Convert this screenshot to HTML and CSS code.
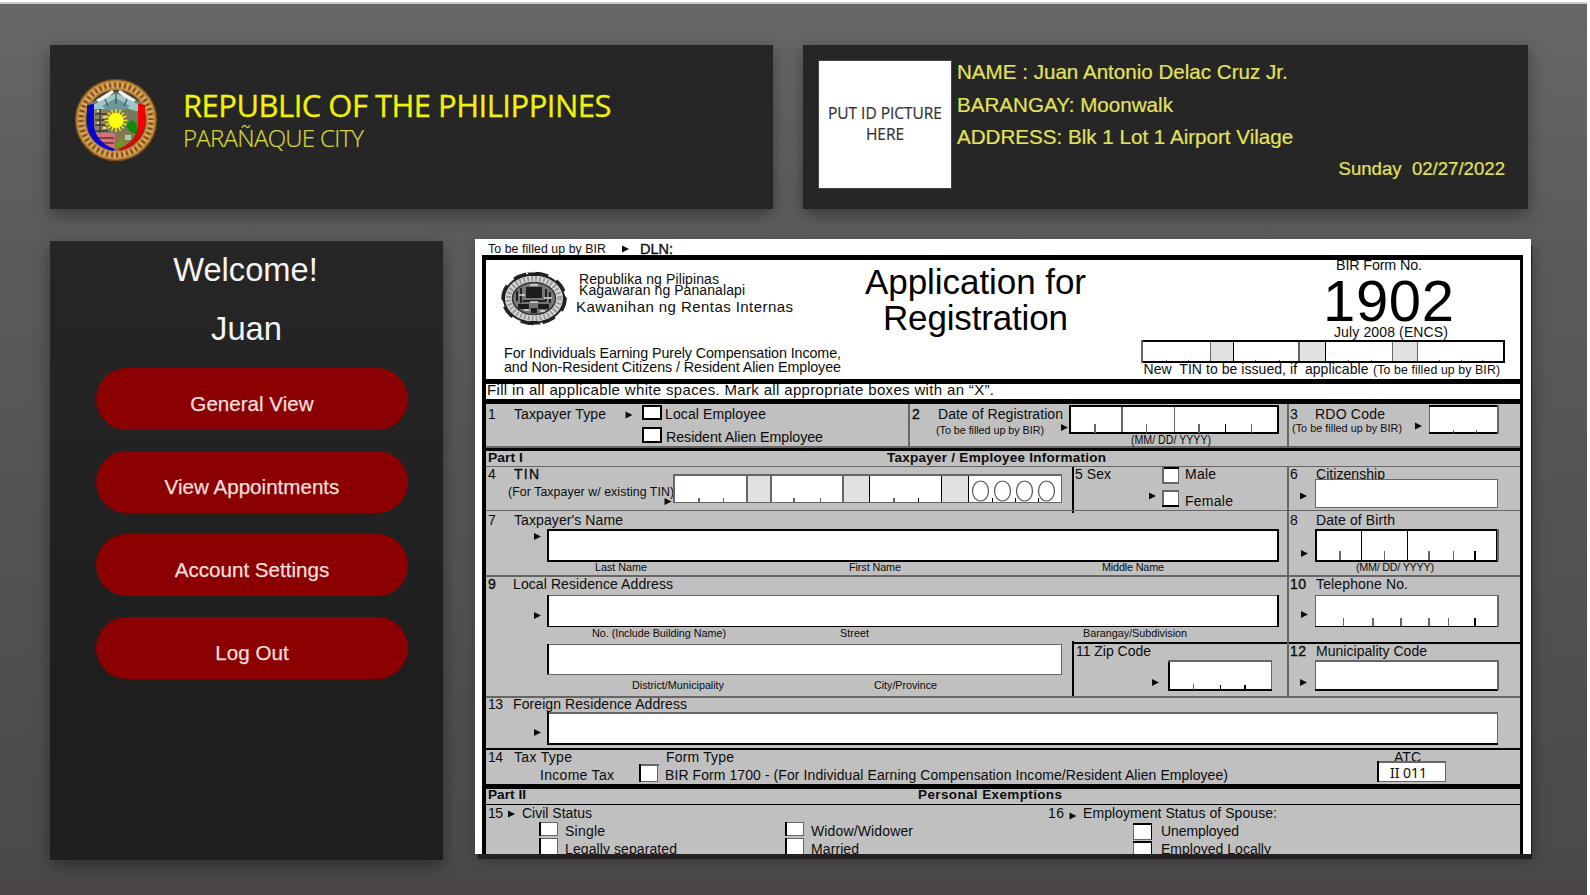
FILE: index.html
```html
<!DOCTYPE html>
<html lang="en">
<head>
<meta charset="utf-8">
<title>Parañaque City Portal</title>
<link rel="stylesheet" href="styles.css">
</head>
<body>
<div class="page">
  <header class="top">
    <section class="card brand">
      <svg class="brand-seal" viewBox="0 0 84 84" width="84" height="84">
        <circle cx="42" cy="42" r="40.5" fill="#a8742c" stroke="#6b4a1c" stroke-width="1.5"/>
        <circle cx="42" cy="42" r="35" fill="none" stroke="#d8a458" stroke-width="8" stroke-dasharray="2.4 2.6"/>
        <circle cx="42" cy="42" r="35" fill="none" stroke="#7a4a20" stroke-width="3.5" stroke-dasharray="1.6 3.4" stroke-dashoffset="2"/>
        <circle cx="42" cy="42" r="39" fill="none" stroke="#c08a40" stroke-width="1.4"/>
        <circle cx="42" cy="42" r="31" fill="#4a4634" stroke="#c08a44" stroke-width="1.4"/>
        <path d="M15 25 42 14 69 25V45C69 61 56 71 42 73 28 71 15 61 15 45Z" fill="#77795e"/>
        <path d="M22 22 38 12 40 14 27 26ZM62 22 46 12 44 14 57 26Z" fill="#f2f2ec"/>
        <path d="M19 27 42 15 66 27 66 34 55 31 42 24 30 31 19 34Z" fill="#9cc8cc"/>
        <path d="M28 28 42 20 56 28 48 33 36 33Z" fill="#6f9699"/>
        <path d="M42 14V26M31 21 34 28M53 21 50 28" stroke="#3f5a60" stroke-width="1.3"/>
        <rect x="20" y="31" width="14" height="27" fill="#8b8064"/>
        <path d="M21 36H33M21 42H33M21 47H33M21 53H34M26 31V58" stroke="#3d3828" stroke-width="1.3"/>
        <path d="M23 33H25M29 39H32M23 45H25M29 50H32" stroke="#e6d8b0" stroke-width="2"/>
        <path d="M21 55H41V71C32 70 25 64 21 55Z" fill="#d87078"/>
        <path d="M22 60H40M26 65H40" stroke="#63343a" stroke-width="1.3"/>
        <path d="M42 56H62C59 65 51 70 42 71Z" fill="#8a7a48"/>
        <path d="M51 57H57V62H51Z" fill="#9fd0b4"/>
        <path d="M42 66 49 62 50 68 42 70Z" fill="#5da020"/>
        <path d="M54 44 59 42 63 47V56L58 55 52 49Z" fill="#0c8a10"/>
        <path d="M13 27 20 26V47C21 58 27 66 41 71L39 73C24 70 13 59 13 44Z" fill="#0505cc"/>
        <path d="M64 26 71 27V44C71 59 60 70 46 73L44 71C57 66 63 58 64 47Z" fill="#c81008"/>
        <path d="M64 26 71 27V46Q69 54 65 56L64 50Z" fill="#f40000"/>
        <path class="sun-rays" d="M42 31V54M30.500 42.500H53.500M34 34.500 50 50.500M50 34.500 34 50.500M37.500 32 46.500 53M46.500 32 37.500 53M31.500 38 52.500 47M52.500 38 31.500 47"/>
        <circle cx="42" cy="42.500" r="7.500" fill="#ffff10"/>
      </svg>
      <div class="brand-text">
        <h1 class="brand-title">REPUBLIC OF THE PHILIPPINES</h1>
        <p class="brand-sub">PARAÑAQUE CITY</p>
      </div>
    </section>
    <section class="card profile">
      <div class="photo">PUT ID PICTURE<br>HERE</div>
      <div class="profile-text">
        <p>NAME : Juan Antonio Delac Cruz Jr.</p>
        <p>BARANGAY: Moonwalk</p>
        <p>ADDRESS: Blk 1 Lot 1 Airport Vilage</p>
        <p class="p-date">Sunday&nbsp; 02/27/2022</p>
      </div>
    </section>
  </header>
  <main class="content">
    <aside class="card sidebar">
      <p class="greeting">Welcome!</p>
      <p class="greeting greeting-name">Juan</p>
      <nav class="menu">
        <a class="menu-btn">General View</a>
        <a class="menu-btn">View Appointments</a>
        <a class="menu-btn">Account Settings</a>
        <a class="menu-btn">Log Out</a>
      </nav>
    </aside>
    <div class="document">
      <svg class="form" viewBox="475 239 1056 615" width="1056" height="615">
        <defs>
          <path id="ar" d="M0 -3.500 7 0 0 3.500Z"/>
        </defs>
        <rect class="w" x="475" y="239" width="1056" height="615"/>
        <text class="t12" x="488" y="253" textLength="118">To be filled up by BIR</text>
        <text class="t14 b5" x="640" y="253.500" textLength="33" lengthAdjust="spacingAndGlyphs">DLN:</text>
        <use href="#ar" x="622" y="249"/>

        <!-- Header block -->
        <g class="seal2">
          <ellipse cx="534" cy="298.500" rx="30" ry="24" fill="#d8d8d8" stroke="#222" stroke-width="2"/>
          <ellipse cx="534" cy="298.500" rx="31" ry="25" fill="none" stroke="#222" stroke-width="3.500" stroke-dasharray="13 9.200"/>
          <ellipse cx="534" cy="298.500" rx="25.500" ry="20" fill="none" stroke="#999" stroke-width="5" stroke-dasharray="2 2"/>
          <ellipse cx="534" cy="298.500" rx="21.500" ry="16" fill="#777" stroke="#333" stroke-width="1.500"/>
          <path d="M526 287H542V298H526ZM518 304H529V309H518ZM538 304H549V309H538ZM531 308H537V313H531Z" fill="#1c1c1c"/>
          <path d="M517 291V301M521 288V303M546 289V301M550 292V303M523 301H546" stroke="#222" stroke-width="2"/>
          <path d="M530 285H538M519 295H525M544 298H552M530 302H538M524 310H529M540 311H545" stroke="#ddd" stroke-width="1.600"/>
          <path d="M501 298.500 505 293V304ZM567 298.500 563 293V304ZM527 272.500H541L537 276H531ZM527 324.500H541L537 321H531Z" fill="#1c1c1c"/>
        </g>
        <g class="t13">
          <text x="579" y="284" textLength="140">Republika ng Pilipinas</text>
          <text x="579" y="295" textLength="166">Kagawaran ng Pananalapi</text>
          <text class="t15" x="576" y="312" textLength="217">Kawanihan ng Rentas Internas</text>
          <text class="t14" x="504" y="357.500" textLength="337">For Individuals Earning Purely Compensation Income,</text>
          <text class="t14" x="504" y="372" textLength="337">and Non-Resident Citizens / Resident Alien Employee</text>
        </g>
        <g class="t35">
          <text x="865" y="294" textLength="221">Application for</text>
          <text x="883" y="330" textLength="185">Registration</text>
        </g>
        <text class="t14" x="1336" y="269.500" textLength="86">BIR Form No.</text>
        <text class="t58" x="1323" y="320.500" textLength="131">1902</text>
        <text class="t13" x="1334" y="336.500" textLength="114">July 2008 (ENCS)</text>
        <g class="crisp">
          <rect class="w" x="1142" y="340" width="363" height="23"/>
          <path class="cell" d="M1211 341H1233V362H1211ZM1300 341H1325V362H1300ZM1393 341H1417V362H1393Z"/>
          <path class="k" d="M1142 340H1505V342H1142ZM1142 361H1505V363H1142ZM1503 340H1505V363H1503ZM1233 341H1234V362H1233ZM1325 341H1326V362H1325Z"/>
          <path class="g" d="M1141 340H1143V363H1141ZM1210 342H1211V361H1210ZM1298 342H1300V361H1298ZM1392 342H1393V361H1392ZM1417 342H1418V361H1417Z"/>
          <path class="g" d="M1166 360H1167V361H1166ZM1188 360H1189V361H1188ZM1255 360H1256V361H1255ZM1279 360H1280V361H1279ZM1348 360H1349V361H1348ZM1371 360H1372V361H1371ZM1439 360H1440V361H1439ZM1461 360H1462V361H1461ZM1482 360H1483V361H1482Z"/>
        </g>
        <text class="t13" x="1143.500" y="374" textLength="225" xml:space="preserve">New  TIN to be issued, if  applicable</text>
        <text class="t12" x="1373" y="374" textLength="127">(To be filled up by BIR)</text>
        <text class="t15" x="487" y="395" textLength="507">Fill in all applicable white spaces. Mark all appropriate boxes with an “X”.</text>

        <!-- Grey body and rules -->
        <g class="crisp">
          <rect class="grey" x="486" y="404" width="1035" height="450"/>
          <path class="k" d="M482 255H1523V260H482ZM482 255H486V854H482ZM1520 255H1523V854H1520ZM486 379H1520V384H486ZM486 399H1520V404H486ZM486 448H1520V451H486ZM1072 466H1074V513H1072ZM1072 641H1074V698H1072ZM1073 642H1520V644H1073ZM486 748H1520V750H486ZM486 784H1520V789H486ZM486 804H1520V805H486Z"/>
          <path class="g" d="M486 446H1520V448H486ZM486 466H1520V467H486ZM486 510H1520V511H486ZM486 575H1520V577H486ZM486 696H1520V698H486ZM908 404H910V447H908ZM1287 404H1289V447H1287ZM1287 466H1289V697H1287Z"/>
        </g>

        <!-- Labels -->
        <g class="t13 up">
          <text x="488" y="420">1</text><text x="514" y="420" textLength="92">Taxpayer Type</text>
          <text x="665" y="420" textLength="101">Local Employee</text>
          <text class="t14" x="666" y="442.500" textLength="157">Resident Alien Employee</text>
          <text class="b5" x="912" y="420">2</text><text x="938" y="420" textLength="125">Date of Registration</text>
          <text x="1290" y="420">3</text><text x="1315" y="420" textLength="70">RDO Code</text>
          <text x="488" y="480">4</text><text class="b5" x="514" y="480" textLength="25">TIN</text>
          <text class="t12" x="508" y="496.500" textLength="166">(For Taxpayer w/ existing TIN)</text>
          <text x="1075" y="480" textLength="36">5 Sex</text>
          <text x="1185" y="480" textLength="31">Male</text><text x="1185" y="506.500" textLength="48">Female</text>
          <text x="1290" y="480">6</text><text x="1316" y="480" textLength="69">Citizenship</text>
          <text x="488" y="526">7</text><text x="514" y="526" textLength="109">Taxpayer's Name</text>
          <text x="1290" y="526">8</text><text x="1316" y="526" textLength="79">Date of Birth</text>
          <text class="b5" x="488" y="590">9</text><text x="513" y="590" textLength="160">Local Residence Address</text>
          <text class="b5" x="1290" y="590" textLength="16">10</text><text x="1316" y="590" textLength="92">Telephone No.</text>
          <text x="1076" y="656.500" textLength="75">11 Zip Code</text>
          <text class="b5" x="1290" y="656.500" textLength="16">12</text><text x="1316" y="656.500" textLength="111">Municipality Code</text>
          <text x="488" y="710" textLength="15">13</text><text x="513" y="710" textLength="174">Foreign Residence Address</text>
          <text x="488" y="763" textLength="15">14</text><text x="514" y="763" textLength="58">Tax Type</text>
          <text x="540" y="781" textLength="74">Income Tax</text>
          <text x="666" y="763" textLength="68">Form Type</text>
          <text x="665" y="781" textLength="563">BIR Form 1700 - (For Individual Earning Compensation Income/Resident Alien Employee)</text>
          <text x="1394" y="763" textLength="27">ATC</text>
          <text x="488" y="819" textLength="15">15</text><text x="522" y="819" textLength="70">Civil Status</text>
          <text x="565" y="836.500" textLength="40">Single</text><text x="565" y="854.500" textLength="112">Legally separated</text>
          <text x="811" y="836.500" textLength="102">Widow/Widower</text><text x="811" y="854.500" textLength="48">Married</text>
          <text x="1048" y="819" textLength="16">16</text><text x="1083" y="819" textLength="194">Employment Status of Spouse:</text>
          <text x="1161" y="836.500" textLength="78">Unemployed</text><text x="1161" y="854.500" textLength="110">Employed Locally</text>
        </g>
        <g class="t13 b up">
          <text x="488" y="462.500" textLength="35" lengthAdjust="spacingAndGlyphs">Part I</text>
          <text x="887" y="462.500" textLength="219">Taxpayer / Employee Information</text>
          <text x="488" y="800" textLength="38" lengthAdjust="spacingAndGlyphs">Part II</text>
          <text x="918" y="800" textLength="144">Personal Exemptions</text>
        </g>
        <g class="t10 up">
          <text x="936" y="434.500" textLength="108">(To be filled up by BIR)</text>
          <text x="1292" y="433" textLength="110">(To be filled up by BIR)</text>
          <text x="595" y="572" textLength="52">Last Name</text><text x="849" y="572" textLength="52">First Name</text>
          <text x="1102" y="572" textLength="62">Middle Name</text><text x="1356" y="572" textLength="78">(MM/ DD/ YYYY)</text>
          <text x="592" y="638" textLength="134">No. (Include Building Name)</text><text x="840" y="638" textLength="29">Street</text>
          <text x="1083" y="638" textLength="104">Barangay/Subdivision</text>
          <text x="632" y="690" textLength="92">District/Municipality</text><text x="874" y="690" textLength="63">City/Province</text>
          <text class="t12" x="1131" y="445" textLength="80" lengthAdjust="spacingAndGlyphs">(MM/ DD/ YYYY)</text>
        </g>

        <!-- Pointers -->
        <use href="#ar" x="625.500" y="415"/><use href="#ar" x="1061" y="427.500"/><use href="#ar" x="1415" y="426"/>
        <use href="#ar" x="664.500" y="501.500"/><use href="#ar" x="1149" y="496"/><use href="#ar" x="1300" y="496"/>
        <use href="#ar" x="534" y="536.500"/><use href="#ar" x="1301" y="553.500"/>
        <use href="#ar" x="534" y="615.500"/><use href="#ar" x="1301" y="614.500"/>
        <use href="#ar" x="1152" y="682.500"/><use href="#ar" x="1300" y="682.500"/>
        <use href="#ar" x="534" y="732.500"/><use href="#ar" x="508" y="814"/><use href="#ar" x="1069.500" y="816"/>

        <!-- Entry boxes -->
        <g class="crisp w">
          <g class="box2">
            <rect x="643" y="406" width="18" height="13"/><rect x="643" y="428" width="18" height="14"/>
            <rect x="1070" y="406" width="208" height="27"/>
            <rect x="548" y="530" width="730" height="31"/><rect x="1316" y="530" width="181" height="31"/>
          </g>
          <g class="box1">
            <rect x="1162.500" y="467.500" width="16" height="16"/><rect x="1162.500" y="490.500" width="16" height="16"/>
            <rect x="1133.500" y="823.500" width="18" height="16"/><rect x="1133.500" y="841.500" width="18" height="20"/>
            <rect x="1429.500" y="405.500" width="68" height="28"/>
            <rect x="673.500" y="474.500" width="388" height="28"/>
            <rect x="1315.500" y="479.500" width="182" height="28"/>
            <rect x="547.500" y="595.500" width="731" height="31"/><rect x="1315.500" y="595.500" width="182" height="31"/>
            <rect x="547.500" y="644.500" width="514" height="30"/>
            <rect x="1168.500" y="660.500" width="103" height="30"/><rect x="1315.500" y="660.500" width="182" height="30"/>
            <rect x="547.500" y="712.500" width="950" height="32"/>
            <rect x="639.500" y="764.500" width="18" height="17"/>
            <rect x="1377.500" y="761.500" width="68" height="20"/>
            <rect x="539.500" y="822.500" width="18" height="13"/><rect x="539.500" y="838.500" width="18" height="20"/>
            <rect x="785.500" y="822.500" width="18" height="13"/><rect x="785.500" y="838.500" width="18" height="20"/>
          </g>
          <path class="cell" d="M747 475H771V502H747ZM843 475H869V502H843ZM942 475H968V502H942Z"/>
          <!-- heavier edges -->
          <path class="k" d="M1429 405H1498V407H1429ZM1429 432H1498V434H1429ZM547 595H549V627H547ZM1277 595H1279V627H1277ZM547 626H1279V627H547ZM1315 626H1498V627H1315ZM547 644H549V675H547ZM1168 660H1170V691H1168ZM1168 689H1272V691H1168ZM1315 689H1498V691H1315ZM547 712H549V745H547ZM547 743H1498V745H547ZM639 764H641V782H639ZM1377 761H1379V782H1377ZM539 822H541V836H539ZM539 838H541V854H539ZM785 822H787V836H785ZM785 838H787V854H785ZM869 474H870V502H869ZM941 474H942V502H941ZM968 474H969V502H968ZM1361 530H1362V561H1361ZM1407 530H1408V561H1407ZM1162 467H1179V469H1162ZM1162 505H1179V507H1162ZM1133 823H1152V825H1133ZM1133 841H1152V843H1133ZM1151 823H1152V840H1151ZM1151 841H1152V854H1151Z"/>
          <path class="g" d="M673 474H1062V476H673ZM673 474H675V502H673ZM746 475H748V502H746ZM770 475H772V502H770ZM842 475H844V502H842ZM1121 407H1123V432H1121ZM1174 407H1175V432H1174ZM1497 405H1499V434H1497ZM1497 529H1499V561H1497ZM1497 595H1499V627H1497ZM547 674H1062V675H547ZM1168 660H1272V662H1168ZM1315 660H1498V662H1315ZM549 712H1498V714H549ZM1497 660H1499V690H1497ZM641 764H659V766H641ZM1379 761H1446V763H1379ZM1162 467H1164V484H1162ZM1162 490H1164V505H1162ZM1162 490H1179V492H1162ZM1162 482H1179V484H1162Z"/>
          <!-- character ticks -->
          <path class="g" d="M1094 424H1096V433H1094ZM1146 424H1147V433H1146ZM1198 424H1200V433H1198ZM1251 424H1252V433H1251ZM1453 430H1454V433H1453ZM1476 430H1477V433H1476ZM698 498H700V502H698ZM723 498H724V502H723ZM793 498H795V502H793ZM820 498H821V502H820ZM893 498H895V502H893ZM1339 551H1341V560H1339ZM1384 551H1385V560H1384ZM1428 551H1430V560H1428ZM1453 551H1454V560H1453ZM1343 618H1344V626H1343ZM1372 618H1374V626H1372ZM1400 618H1402V626H1400ZM1428 618H1430V626H1428ZM1448 618H1449V626H1448ZM1193 684H1194V690H1193Z"/>
          <path class="k" d="M1225 424H1226V433H1225ZM918 498H919V502H918ZM1474 551H1476V560H1474ZM1474 618H1476V626H1474ZM1220 685H1221V690H1220ZM1244 685H1246V690H1244ZM992 498H993V502H992ZM1015 498H1016V502H1015ZM1038 498H1039V502H1038Z"/>
        </g>
        <g class="zero">
          <ellipse cx="980.500" cy="491" rx="8" ry="10"/><ellipse cx="1002.500" cy="491" rx="8" ry="10"/>
          <ellipse cx="1024.500" cy="491" rx="8" ry="10"/><ellipse cx="1046.500" cy="491" rx="8" ry="10"/>
        </g>
        <text class="atc" x="1390" y="778" textLength="37">II 011</text>
      </svg>
    </div>
  </main>
</div>
</body>
</html>
```
FILE: styles.css
```css
* { box-sizing: border-box; }
body {
  margin: 0;
  padding: 2px 3px 0 0;
  background: #fff;
  font-family: "Liberation Sans", Arial, sans-serif;
}
h1, p { margin: 0; }
.page {
  height: 893px;
  overflow: hidden;
  padding: 41px 56px 0 50px;
  border-top: 2px solid #cbcbcb;
  background: linear-gradient(#676767, #5b5b5b 28%, #4b4949 97%, #4b4646);
}
.card {
  background: #262626;
  box-shadow: 0 6px 16px rgba(0, 0, 0, .38);
}
.top { display: flex; gap: 30px; height: 164px; }
.brand {
  width: 723px;
  display: flex;
  align-items: flex-start;
  padding: 33px 0 0 24px;
}
.brand-text { margin-left: 25px; white-space: nowrap; }
.brand-title {
  margin-top: 5px;
  font: 400 31px/44px "Open Sans", sans-serif;
  letter-spacing: -.52px;
  color: #f1f10c;
  -webkit-text-stroke: .3px #f1f10c;
}
.brand-sub {
  margin-top: -7px;
  font: 300 24px/36px "Open Sans", sans-serif;
  letter-spacing: -.7px;
  color: #d6d63a;
  -webkit-text-stroke: .2px #d6d63a;
}
.profile { width: 725px; display: flex; padding: 16px 23px 0 16px; }
.photo {
  width: 132px;
  height: 127px;
  padding-top: 42px;
  background: #fff;
  box-shadow: 0 0 0 1px #444;
  text-align: center;
  color: #333;
  font: 400 15.5px/21px "Open Sans", sans-serif;
  letter-spacing: -.02px;
  white-space: nowrap;
  -webkit-text-stroke: .2px #333;
}
.profile-text {
  flex: 1;
  margin: -5px 0 0 6px;
  font-size: 20.6px;
  line-height: 32.6px;
  color: #e2e25c;
  white-space: nowrap;
  -webkit-text-stroke: .2px #e2e25c;
}
.p-date {
  font-size: 18.6px;
  line-height: 29px;
  text-align: right;
}
.content { display: flex; margin-top: 30px; align-items: flex-start; }
.sidebar {
  width: 393px;
  height: 619px;
  margin-top: 2px;
  padding-top: 1px;
  background: linear-gradient(#262626, #1f1f1f 65%, #221e1e);
}
.greeting {
  width: 391px;
  height: 36px;
  margin-bottom: 22px;
  padding-top: 10px;
  font-size: 32.7px;
  line-height: 36px;
  text-align: center;
  color: #f4f4f4;
}
.greeting-name { width: 393px; padding-top: 11px; }
.menu {
  display: flex;
  flex-direction: column;
  gap: 20.7px;
  margin: 32px 35px 0 46px;
}
.menu-btn {
  height: 62.3px;
  border-radius: 31px;
  padding-top: 12px;
  background: #8b0000;
  color: #f3dfdb;
  font-size: 20.6px;
  line-height: 48px;
  text-align: center;
  -webkit-text-stroke: .25px #f3dfdb;
}
.document {
  width: 1056px;
  height: 615px;
  margin-left: 32px;
  box-shadow: 2px 6px 1px -1px #252122, 2px 5px 14px rgba(0, 0, 0, .3);
}
.form { display: block; overflow: hidden; fill: #0c0c0c; }
.crisp { shape-rendering: crispEdges; }
.form .w { fill: #fff; }
.form .grey { fill: #c0c0c0; }
.form .cell { fill: #e1e1e1; stroke: none; }
.form .k { fill: #000; }
.form .g { fill: #666; }
.box2 { stroke: #000; stroke-width: 2; }
.box1 { stroke: #666; stroke-width: 1; }
.zero { fill: none; stroke: #555; stroke-width: 1.2; }
.t10 { font-size: 10.8px; }
.t12 { font-size: 12.3px; }
.t13 { font-size: 14px; }
.t14 { font-size: 14.3px; }
.t15 { font-size: 15px; }
.t35 { font-size: 35px; fill: #000; }
.t58 { font-size: 58px; fill: #000; }
.b { font-weight: 700; font-size: 13.5px; }
.b5 { stroke: #0c0c0c; stroke-width: .35; }
.up { transform: translateY(-.6px); }
.atc { font: 14px "Noto Sans", sans-serif; }
.sun-rays { stroke: #f2dc10; stroke-width: 1.6; fill: none; }
```
